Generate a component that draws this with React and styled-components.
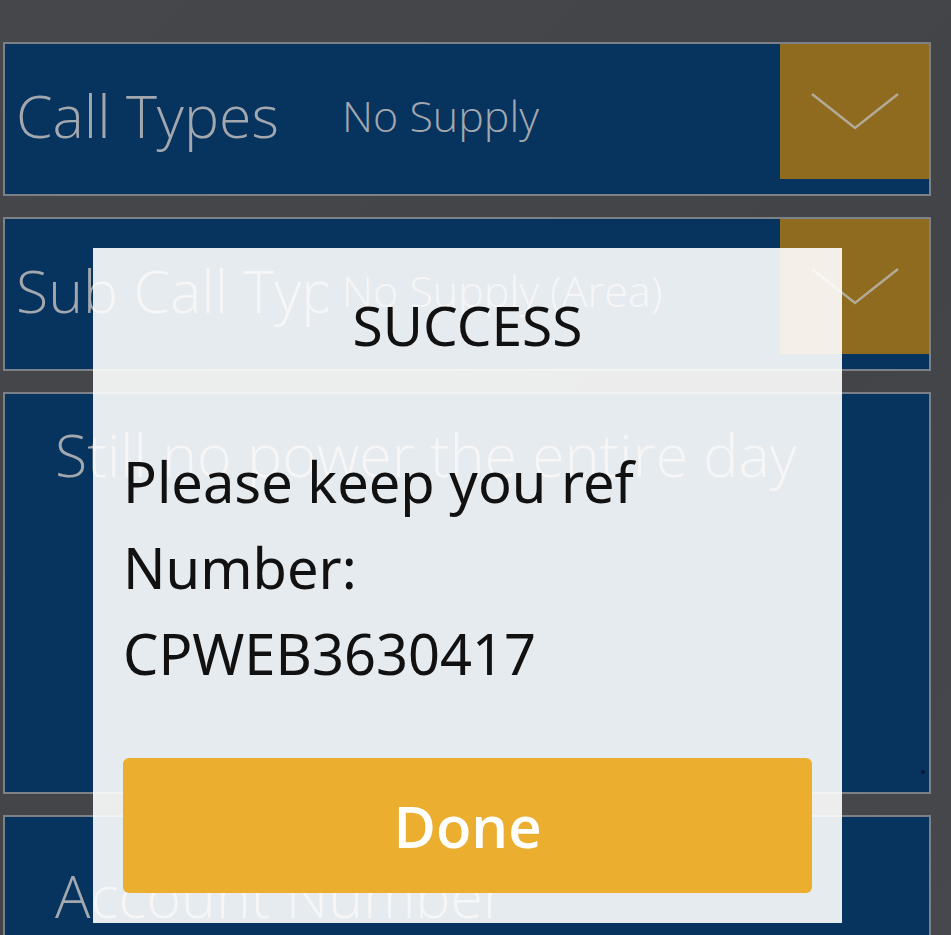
import React from "react";
import styled, { createGlobalStyle } from "styled-components";

const GlobalStyle = createGlobalStyle`
  html, body {
    margin: 0;
    padding: 0;
    background: #45464a;
  }
  body {
    font-family: "Open Sans", "Noto Sans", sans-serif;
  }
`;

const Page = styled.div`
  min-height: 935px;
  box-sizing: border-box;
  padding: 42px 20px 0 3px;
  display: flex;
  flex-direction: column;
  gap: 21px;
  overflow: hidden;
  background: linear-gradient(135deg, #46474b 0%, #434448 60%, #47484c 100%);
`;

const Field = styled.div`
  position: relative;
  width: 928px;
  height: ${(p) => p.$height}px;
  box-sizing: border-box;
  border: 2px solid #7c8087;
  background: #07335f;
  display: flex;
  align-items: ${(p) => (p.$multi ? "flex-start" : "center")};
  overflow: hidden;
`;

const Label = styled.span`
  flex: 0 0 323px;
  padding-left: 11px;
  box-sizing: border-box;
  white-space: nowrap;
  overflow: hidden;
  font-size: 59px;
  font-weight: 300;
  color: #a3a7ae;
  margin-top: -8px;
`;

const Value = styled.span`
  flex: 1;
  padding-left: 14px;
  white-space: nowrap;
  font-size: 43px;
  font-weight: 300;
  color: #a3a7ae;
  margin-top: -8px;
`;

const Placeholder = styled.span`
  padding: ${(p) => p.$top}px 0 0 50px;
  font-size: 59px;
  font-weight: 300;
  color: #a3a7ae;
  white-space: nowrap;
`;

const ArrowBox = styled.div`
  align-self: flex-start;
  flex: 0 0 149px;
  height: 135px;
  background: #8f6b1f;
  display: flex;
  align-items: center;
  justify-content: center;
`;

const ResizeDot = styled.span`
  position: absolute;
  right: 4px;
  bottom: 18px;
  width: 4px;
  height: 4px;
  border-radius: 50%;
  background: #0a1a30;
`;

const Overlay = styled.div`
  position: fixed;
  left: 93px;
  top: 248px;
  width: 749px;
  height: 675px;
  box-sizing: border-box;
  background: rgba(255, 255, 255, 0.9);
  padding: 38px 30px 30px 30px;
  display: flex;
  flex-direction: column;
`;

const Title = styled.h2`
  margin: 0;
  text-align: center;
  font-family: "Noto Sans", "Open Sans", sans-serif;
  font-size: 55px;
  font-weight: 400;
  line-height: 1.4;
  color: #111;
`;

const Message = styled.p`
  margin: 75px 0 0 0;
  font-family: "Noto Sans", "Open Sans", sans-serif;
  font-size: 56px;
  line-height: 86px;
  color: #111;
  flex: 1;
`;

const DoneButton = styled.button`
  height: 135px;
  border: none;
  border-radius: 6px;
  background: #ebae2e;
  color: #fff;
  font-family: "Open Sans", "Noto Sans", sans-serif;
  font-size: 58px;
  font-weight: 600;
  cursor: pointer;
`;

const Chevron = () => (
  <svg width="90" height="40" viewBox="0 0 90 40">
    <polyline
      points="2,2 45,36 88,2"
      fill="none"
      stroke="#b3aa98"
      strokeWidth="2.5"
    />
  </svg>
);

const SelectField = ({ label, value }) => (
  <Field $height={154}>
    <Label>{label}</Label>
    <Value>{value}</Value>
    <ArrowBox>
      <Chevron />
    </ArrowBox>
  </Field>
);

export default function App() {
  return (
    <>
      <GlobalStyle />
      <Page>
        <SelectField label="Call Types" value="No Supply" />
        <SelectField label="Sub Call Types" value="No Supply (Area)" />
        <Field $height={402} $multi>
          <Placeholder $top={20}>Still no power the entire day</Placeholder>
          <ResizeDot />
        </Field>
        <Field $height={160} $multi>
          <Placeholder $top={38}>Account Number</Placeholder>
        </Field>
      </Page>
      <Overlay>
        <Title>SUCCESS</Title>
        <Message>
          Please keep you ref
          <br />
          Number:
          <br />
          CPWEB3630417
        </Message>
        <DoneButton>Done</DoneButton>
      </Overlay>
    </>
  );
}
